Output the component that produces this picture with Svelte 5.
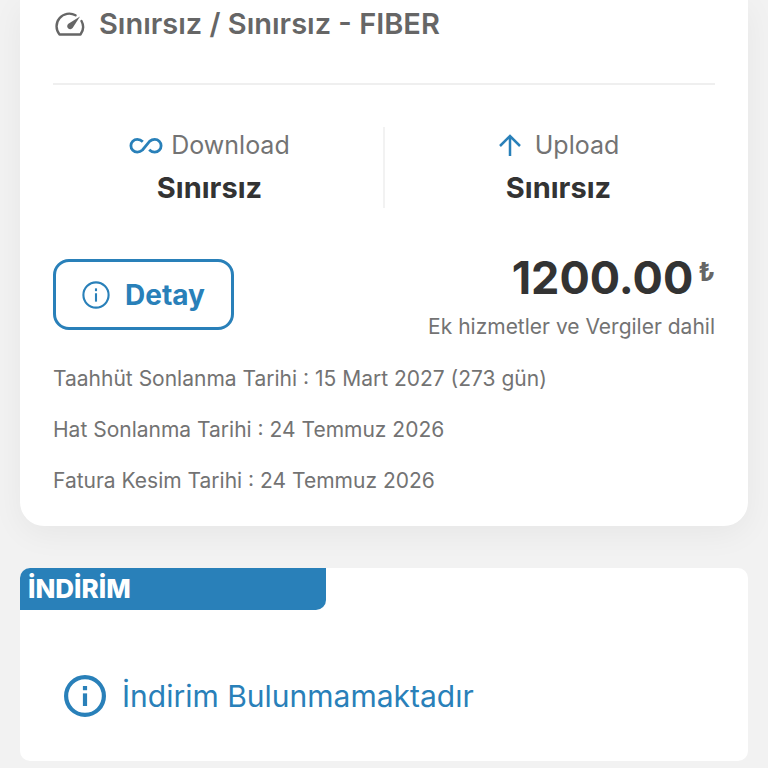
<script lang="ts">
  const plan = "Sınırsız / Sınırsız - FIBER";
  const price = "1200.00";

  const dates = [
    ["Taahhüt Sonlanma Tarihi", "15 Mart 2027 (273 gün)"],
    ["Hat Sonlanma Tarihi", "24 Temmuz 2026"],
    ["Fatura Kesim Tarihi", "24 Temmuz 2026"],
  ];
</script>

{#snippet infoIcon(size: number, stroke: number)}
  <svg width={size} height={size} viewBox="0 0 40 40" fill="none" stroke="currentColor" stroke-width={stroke} aria-hidden="true">
    <circle cx="20" cy="20" r="18" />
    <path d="M20 17.500v12" />
    <path d="M20 10.500v4" />
  </svg>
{/snippet}

<main>
  <section class="card">
    <h2>
      <svg width="30" height="26" viewBox="0 0 30 26" fill="none" stroke="currentColor" stroke-width="2.400" stroke-linecap="round" stroke-linejoin="round" aria-hidden="true">
        <path d="M20.500 4.300A12.700 12.700 0 0 0 4.500 23.500H25.500A12.700 12.700 0 0 0 26.500 10" />
        <path d="M25 5.500l-7.400 11.500a3 3 0 1 1-4.200-4.200z" fill="currentColor" stroke="none" />
      </svg>
      {plan}
    </h2>

    <div class="speeds">
      <div class="speed">
        <div class="label">
          <svg width="34" height="18" viewBox="0 0 34 18" fill="none" stroke="currentColor" stroke-width="2.800" aria-hidden="true">
            <path d="M13.800 4.700C12.300 3.200 10.500 2.300 8.300 2.300a6.400 6.400 0 0 0 0 12.800c2.100 0 3.700-.8 5.200-2.100L20.500 4.400c1.500-1.300 3.100-2.100 5.200-2.100a6.400 6.400 0 0 1 0 12.800c-2.200 0-4-.9-5.500-2.400" />
          </svg>
          Download
        </div>
        <strong>Sınırsız</strong>
      </div>
      <div class="divider"></div>
      <div class="speed">
        <div class="label upload">
          <svg width="24" height="24" viewBox="0 0 24 24" fill="none" stroke="currentColor" stroke-width="2.500" aria-hidden="true">
            <path d="M12 22V2M2 12l10-10 10 10" />
          </svg>
          Upload
        </div>
        <strong>Sınırsız</strong>
      </div>
    </div>

    <div class="summary">
      <button type="button">
        {@render infoIcon(28, 3)}
        Detay
      </button>
      <div class="cost">
        <div class="price">{price}<span>₺</span></div>
        <div class="tax">Ek hizmetler ve Vergiler dahil</div>
      </div>
    </div>

    {#each dates as [name, value]}
      <p>{name} : {value}</p>
    {/each}
  </section>

  <section class="discount">
    <h3>İNDİRİM</h3>
    <div class="notice">
      {@render infoIcon(42, 4)}
      İndirim Bulunmamaktadır
    </div>
  </section>
</main>

<style>
  :global(body) {
    background: #f2f2f2;
  }

  main {
    padding: 0 20px;
    font-family: Inter, "Open Sans", sans-serif;
    color: #737373;
  }

  svg {
    flex: none;
  }

  .card {
    padding: 4px 33px 20px;
    background: #fff;
    border-radius: 0 0 24px 24px;
    box-shadow: 0 8px 32px rgba(0, 0, 0, 0.05);
  }

  h2 {
    display: flex;
    align-items: center;
    gap: 14px;
    margin: 0 0 42px;
    padding: 0 2px 39px;
    border-bottom: 2px solid #efefef;
    font-size: 29px;
    font-weight: 600;
    line-height: 40px;
    color: #666;
  }

  .speeds {
    display: grid;
    grid-template-columns: 1fr 2px 1fr;
    gap: 17px;
    margin-bottom: 47px;
  }

  .speed {
    display: flex;
    flex-direction: column;
    align-items: center;
  }

  .divider {
    margin-bottom: 4px;
    background: #f2f2f2;
  }

  .label {
    display: flex;
    align-items: center;
    gap: 8px;
    font-size: 25px;
    line-height: 37px;
  }

  .label.upload {
    gap: 13px;
  }

  .label svg {
    color: #2980b9;
  }

  strong {
    font-size: 29px;
    font-weight: 700;
    line-height: 48px;
    color: #333;
  }

  .summary {
    display: flex;
    justify-content: space-between;
    margin-bottom: 11px;
  }

  button {
    display: flex;
    align-items: center;
    align-self: flex-start;
    gap: 15px;
    height: 71px;
    padding: 0 26px;
    background: #fff;
    border: 3px solid #2980b9;
    border-radius: 16px;
    font: 700 28px Inter, "Open Sans", sans-serif;
    color: #2980b9;
  }

  .cost {
    text-align: right;
  }

  .price {
    display: flex;
    justify-content: flex-end;
    gap: 5px;
    font-size: 45px;
    font-weight: 700;
    line-height: 38px;
    color: #333;
  }

  .price span {
    font-size: 26px;
    line-height: 26px;
    color: #666;
  }

  .tax {
    margin-top: 15px;
    font-size: 21px;
    line-height: 30px;
  }

  p {
    margin: 0;
    font-size: 21px;
    line-height: 51px;
  }

  .discount {
    margin-top: 42px;
    background: #fff;
    border-radius: 10px;
  }

  h3 {
    width: 42%;
    box-sizing: border-box;
    margin: 0;
    padding: 0 8px;
    background: #2980b9;
    border-radius: 10px 0;
    font-size: 26px;
    font-weight: 800;
    line-height: 42px;
    color: #fff;
  }

  .notice {
    display: flex;
    align-items: center;
    gap: 16px;
    padding: 64px 44px 43px;
    font-size: 30px;
    line-height: 44px;
    color: #2980b9;
  }
</style>
